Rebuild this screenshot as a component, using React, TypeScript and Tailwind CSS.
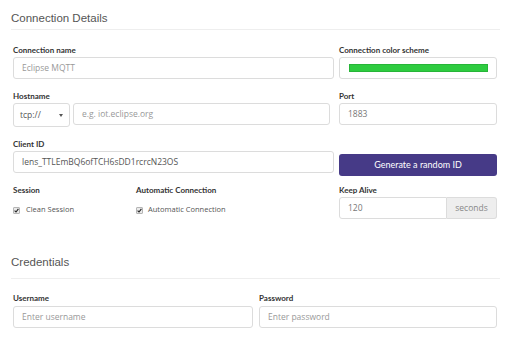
import React from "react";

const labelCls =
  "block text-[8px] leading-[10px] font-bold text-[#333] font-['Lato','Liberation_Sans',sans-serif]";
const inputCls =
  "flex items-center h-[22px] border border-[#dcdcdc] rounded-[3px] bg-white px-[8px] text-[8.5px] font-['Open_Sans','Liberation_Sans',sans-serif]";

function Check() {
  return (
    <span className="flex items-center justify-center w-[7px] h-[7px] border border-[#b5b5b5] bg-[#eaeaea] rounded-[1px]">
      <svg width="5" height="5" viewBox="0 0 5 5">
        <path d="M0.6 2.6 L2 4 L4.4 0.8" stroke="#222" strokeWidth="1.1" fill="none" />
      </svg>
    </span>
  );
}

export default function App() {
  return (
    <div className="w-[524px] h-[341px] bg-white pl-[11px] overflow-hidden">
      <div className="w-[489px] h-[30px] pt-[11px] border-b border-[#eeeeee]">
        <h2 className="text-[11.5px] leading-[14px] text-[#555] font-['Liberation_Sans',sans-serif]">
          Connection Details
        </h2>
      </div>

      <div className="ml-[2px] w-[484px]">
        {/* Row 1 */}
        <div className="flex gap-[5px] mt-[15px]">
          <div className="w-[321px]">
            <label className={labelCls}>Connection name</label>
            <div className={`${inputCls} mt-[2px] text-[#999]`}>Eclipse MQTT</div>
          </div>
          <div className="w-[158px]">
            <label className={labelCls}>Connection color scheme</label>
            <div className="mt-[2px] h-[22px] border border-[#dcdcdc] rounded-[3px] bg-white pl-[9px] pr-[8px] flex items-center">
              <div className="w-full h-[8px] bg-[#2ecc40] border border-[#27b538]" />
            </div>
          </div>
        </div>

        {/* Row 2 */}
        <div className="flex gap-[5px] mt-[12px]">
          <div className="w-[321px]">
            <label className={labelCls}>Hostname</label>
            <div className="flex gap-[3px] mt-[2px] items-start">
              <div className="w-[57px] h-[24px] border border-[#dcdcdc] rounded-[3px] bg-white flex items-center justify-between pl-[6px] pr-[6px] text-[8.5px] text-[#555] font-['Open_Sans','Liberation_Sans',sans-serif]">
                <span>tcp://</span>
                <svg width="4" height="3" viewBox="0 0 4 3">
                  <path d="M0 0 H4 L2 3 Z" fill="#555" />
                </svg>
              </div>
              <div className={`${inputCls} w-[257px] text-[#999]`}>e.g. iot.eclipse.org</div>
            </div>
          </div>
          <div className="w-[158px]">
            <label className={labelCls}>Port</label>
            <div className={`${inputCls} mt-[2px] text-[#777]`}>1883</div>
          </div>
        </div>

        {/* Row 3 */}
        <div className="flex gap-[5px] mt-[12px]">
          <div className="w-[321px]">
            <label className={labelCls}>Client ID</label>
            <div className={`${inputCls} mt-[2px] text-[#555]`}>lens_TTLEmBQ6ofTCH6sDD1rcrcN23OS</div>
          </div>
          <div className="w-[158px] pt-[15px]">
            <button className="block w-full h-[22px] rounded-[3px] bg-[#463a87] text-white text-[9px] leading-[22px] font-['Lato','Liberation_Sans',sans-serif]">
              Generate a random ID
            </button>
          </div>
        </div>

        {/* Row 4 */}
        <div className="flex mt-[9px]">
          <div className="w-[123px]">
            <label className={labelCls}>Session</label>
            <div className="flex items-center gap-[6px] mt-[10px] h-[10px] text-[7.5px] text-[#555] font-['Open_Sans','Liberation_Sans',sans-serif]">
              <Check />
              <span>Clean Session</span>
            </div>
          </div>
          <div className="w-[198px]">
            <label className={labelCls}>Automatic Connection</label>
            <div className="flex items-center gap-[5px] mt-[10px] h-[10px] text-[7.5px] text-[#555] font-['Open_Sans','Liberation_Sans',sans-serif]">
              <Check />
              <span>Automatic Connection</span>
            </div>
          </div>
          <div className="w-[158px] ml-[5px]">
            <label className={labelCls}>Keep Alive</label>
            <div className="flex mt-[2px] h-[22px]">
              <div className="flex items-center w-[108px] h-full border border-[#dcdcdc] rounded-l-[3px] bg-white px-[8px] text-[8.5px] text-[#777] font-['Open_Sans','Liberation_Sans',sans-serif]">
                120
              </div>
              <div className="flex items-center justify-center w-[50px] h-full border border-l-0 border-[#dcdcdc] rounded-r-[3px] bg-[#eeeeee] text-[8.5px] text-[#888] font-['Open_Sans','Liberation_Sans',sans-serif]">
                seconds
              </div>
            </div>
          </div>
        </div>
      </div>

      <div className="w-[489px] h-[24px] mt-[36px] border-b border-[#eeeeee]">
        <h2 className="text-[11.5px] leading-[14px] text-[#555] font-['Liberation_Sans',sans-serif]">
          Credentials
        </h2>
      </div>

      <div className="ml-[2px] w-[484px] flex gap-[6px] mt-[14px]">
        <div className="w-[240px]">
          <label className={labelCls}>Username</label>
          <div className={`${inputCls} mt-[3px] text-[#999]`}>Enter username</div>
        </div>
        <div className="w-[238px]">
          <label className={labelCls}>Password</label>
          <div className={`${inputCls} mt-[3px] text-[#999]`}>Enter password</div>
        </div>
      </div>
    </div>
  );
}
